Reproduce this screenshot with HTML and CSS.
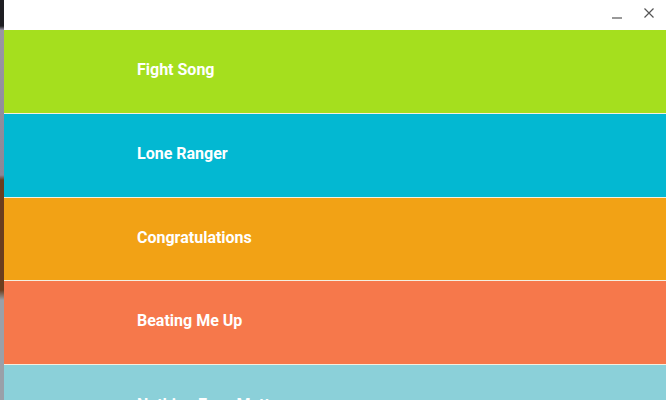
FILE: index.html
```html
<!DOCTYPE html>
<html lang="en">
<head>
    <meta charset="UTF-8">
    <title>Playlist</title>
    <link rel="stylesheet" href="styles.css">
</head>
<body>
    <div class="window">
        <div class="titlebar">
            <button class="win-btn" aria-label="Minimize">
                <svg width="12" height="12" viewBox="0 0 12 12"><path d="M1 11h10" stroke="#555" stroke-width="1.2"/></svg>
            </button>
            <button class="win-btn" aria-label="Close">
                <svg width="12" height="12" viewBox="0 0 12 12"><path d="M1.5 1.5l9 9M10.5 1.5l-9 9" stroke="#555" stroke-width="1.2"/></svg>
            </button>
        </div>
        <ul class="songs">
            <li class="song song-green">Fight Song</li>
            <li class="song song-blue">Lone Ranger</li>
            <li class="song song-orange">Congratulations</li>
            <li class="song song-coral">Beating Me Up</li>
            <li class="song song-sky">Nothing Even Matters</li>
        </ul>
    </div>
</body>
</html>
```

FILE: styles.css
```css
html, body {
    height: 100%;
}
body {
    margin: 0;
    overflow: hidden;
    font-family: Roboto, "Liberation Sans", sans-serif;
    background: linear-gradient(#1e1e22 0, #1e1e22 26px, #9a96a4 30px, #8c8896 175px, #6b3e1e 180px, #6b3e1e 290px, #9aa0a8 300px);
    display: flex;
}
.window {
    flex: 1;
    margin-left: 4px;
    background: #fff;
    display: flex;
    flex-direction: column;
    overflow: hidden;
}
.titlebar {
    flex-shrink: 0;
    height: 30px;
    display: flex;
    justify-content: flex-end;
    align-items: flex-start;
    padding-right: 6px;
    gap: 10px;
}
.win-btn {
    border: none;
    background: none;
    padding: 7px 5px 0;
    cursor: pointer;
}
.songs {
    flex-shrink: 0;
    list-style: none;
    margin: 0;
    padding: 0;
    background: #f4efe0;
}
.song {
    height: 83px;
    box-sizing: border-box;
    padding: 0 0 4px 133px;
    margin-bottom: 1px;
    display: flex;
    align-items: center;
    color: #fff;
    font-size: 16px;
    font-weight: bold;
}
.song:nth-child(3) {
    height: 82px;
}
.song-green {
    background: #a5df1e;
}
.song-blue {
    background: #03b8d2;
}
.song-orange {
    background: #f2a215;
}
.song-coral {
    background: #f6784b;
}
.song-sky {
    background: #8bd0d9;
}
```
